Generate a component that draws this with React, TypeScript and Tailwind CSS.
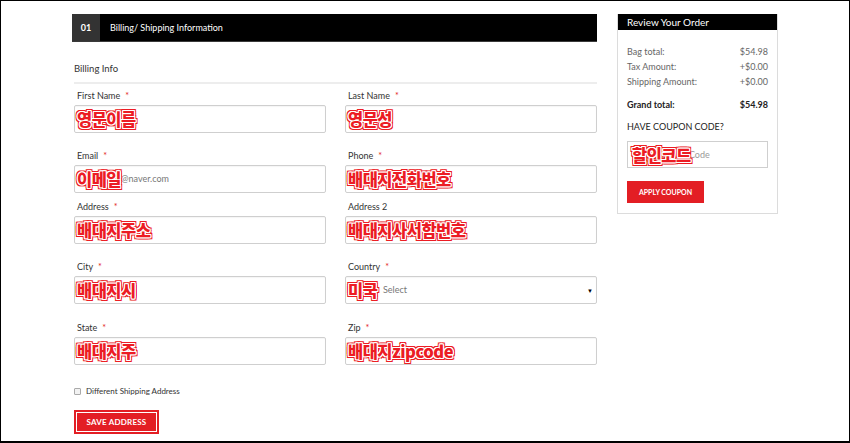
import React from 'react';

/* red hand-written style notes laid over the fields */
const mark =
  "pointer-events-none absolute left-[2px] top-1/2 -translate-y-1/2 whitespace-nowrap font-['Noto_Sans_CJK_KR',sans-serif] text-[16.5px] font-black leading-none tracking-[-0.5px] text-[#ec1c24] [text-shadow:1px_0_0_#fff,-1px_0_0_#fff,0_1px_0_#fff,0_-1px_0_#fff,1px_1px_0_#fff,-1px_-1px_0_#fff,1px_-1px_0_#fff,-1px_1px_0_#fff,2px_0_0_#ec1c24,-2px_0_0_#ec1c24,0_2px_0_#ec1c24,0_-2px_0_#ec1c24,2px_2px_0_#ec1c24,-2px_-2px_0_#ec1c24,2px_-2px_0_#ec1c24,-2px_2px_0_#ec1c24]";

type FieldProps = {
  label: string;
  required?: boolean;
  note?: string;
  children?: React.ReactNode;
};

function Field({ label, required = true, note, children }: FieldProps) {
  return (
    <div>
      <div className="mb-[3px] h-[12px] pl-[3px] text-[9px] leading-[12px] text-[#333]">
        {label}
        {required && <span className="ml-[5px] text-[#e31e24]">*</span>}
      </div>
      <div className="relative h-[28px] rounded-[2px] border border-[#cfcfcf] bg-white shadow-[inset_0_1px_1px_rgba(0,0,0,0.04)]">
        {children}
        {note && <span className={mark}>{note}</span>}
      </div>
    </div>
  );
}

const summary = [
  { label: 'Bag total:', value: '$54.98' },
  { label: 'Tax Amount:', value: '+$0.00' },
  { label: 'Shipping Amount:', value: '+$0.00' },
];

export default function App() {
  return (
    <div className="h-[443px] w-[850px] overflow-hidden border-x border-t border-b-2 border-black bg-white font-['Lato',sans-serif]">
      <div className="flex items-start gap-[20px] pl-[71px] pt-[13px]">
        {/* ---- billing form ---- */}
        <div className="w-[525px]">
          <div className="flex h-[28px] bg-black border-b border-[#3a3a3a]">
            <div className="flex w-[28px] items-center justify-center bg-[#333] text-[9px] font-bold text-white">
              01
            </div>
            <div className="flex items-center pl-[10px] text-[9px] text-white">
              Billing/ Shipping Information
            </div>
          </div>

          <div className="mt-[21px] h-[12px] pl-[2px] text-[9.5px] leading-[12px] text-[#333]">
            Billing Info
          </div>
          <div className="ml-[2px] mt-[7px] border-b-2 border-[#ededed]" />

          <div className="pl-[2px]">
            <div className="mt-[6px] grid grid-cols-2 gap-x-[19px]">
              <Field label="First Name" note="영문이름" />
              <Field label="Last Name" note="영문성" />
            </div>
            <div className="mt-[17px] grid grid-cols-2 gap-x-[19px]">
              <Field label="Email" note="이메일">
                <span className="absolute left-[46px] top-1/2 -translate-y-1/2 text-[9px] text-[#777]">
                  @naver.com
                </span>
              </Field>
              <Field label="Phone" note="배대지전화번호" />
            </div>
            <div className="mt-[8px] grid grid-cols-2 gap-x-[19px]">
              <Field label="Address" note="배대지주소" />
              <Field label="Address 2" required={false} note="배대지사서함번호" />
            </div>
            <div className="mt-[17px] grid grid-cols-2 gap-x-[19px]">
              <Field label="City" note="배대지시" />
              <Field label="Country" note="미국">
                <div className="flex h-full items-center justify-between pl-[37px] pr-[3px]">
                  <span className="text-[9px] text-[#777]">Select</span>
                  <span className="text-[6px] text-black">▼</span>
                </div>
              </Field>
            </div>
            <div className="mt-[18px] grid grid-cols-2 gap-x-[19px]">
              <Field label="State" note="배대지주" />
              <Field label="Zip" note="배대지zipcode" />
            </div>

            <div className="mt-[20px] flex h-[12px] items-center">
              <span className="h-[7px] w-[7px] rounded-[1px] border border-[#aaa] bg-[#f2f2f2]" />
              <span className="ml-[5px] text-[8px] text-[#333]">Different Shipping Address</span>
            </div>

            <div className="mt-[13px] h-[24px] w-[85px] border-2 border-[#e31e24] bg-white p-[1px]">
              <div className="flex h-full items-center justify-center bg-[#e31e24] text-[8px] font-bold tracking-[0.2px] text-white">
                SAVE ADDRESS
              </div>
            </div>
          </div>
        </div>

        {/* ---- order summary ---- */}
        <div className="w-[161px] border border-[#dcdcdc] border-t-0">
          <div className="h-[16px] bg-black pl-[9px] text-[10px] leading-[16px] text-white">
            Review Your Order
          </div>
          <div className="px-[9px] pb-[10px]">
            <div className="mt-[14px]">
              {summary.map((row) => (
                <div
                  key={row.label}
                  className="flex h-[15px] items-center justify-between text-[9px] text-[#666]"
                >
                  <span>{row.label}</span>
                  <span>{row.value}</span>
                </div>
              ))}
            </div>
            <div className="mt-[9px] flex h-[14px] items-center justify-between text-[9px] font-bold text-[#222]">
              <span>Grand total:</span>
              <span>$54.98</span>
            </div>
            <div className="mt-[8px] h-[14px] text-[9px] leading-[14px] text-[#222]">
              HAVE COUPON CODE?
            </div>
            <div className="relative mt-[7px] h-[27px] border border-[#cfcfcf] bg-white">
              <span className="absolute left-[4px] top-1/2 -translate-y-1/2 text-[9px] text-[#999]">
                Enter Coupon Code
              </span>
              <span className={`${mark} left-[4px]`}>할인코드</span>
            </div>
            <div className="mt-[13px] flex h-[22px] w-[77px] items-center justify-center bg-[#e31e24] text-[7px] font-bold text-white">
              APPLY COUPON
            </div>
          </div>
        </div>
      </div>
    </div>
  );
}
